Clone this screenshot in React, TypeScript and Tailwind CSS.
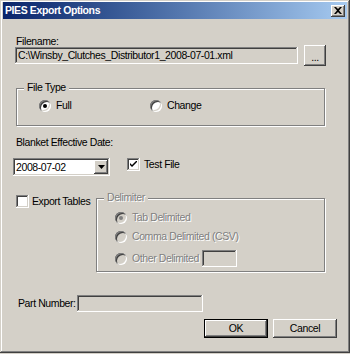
import type { ReactNode } from 'react'

const raised =
  'shadow-[inset_-1px_-1px_#404040,inset_1px_1px_#ffffff,inset_-2px_-2px_#808080,inset_2px_2px_#d4d0c8]'
const sunken =
  'shadow-[inset_-1px_-1px_#ffffff,inset_1px_1px_#808080,inset_-2px_-2px_#d4d0c8,inset_2px_2px_#404040]'
const disabledText = 'text-[#808080] [text-shadow:1px_1px_0_#ffffff]'

function GroupBox({ title, disabled, className, children }: { title: string; disabled?: boolean; className: string; children: ReactNode }) {
  return (
    <div className={`relative border border-[#808080] shadow-[1px_1px_0_#ffffff,inset_1px_1px_0_#ffffff] ${className}`}>
      <span className={`absolute -top-[8px] left-[7px] bg-[#d4d0c8] px-[3px] leading-[13px] ${disabled ? disabledText : ''}`}>
        {title}
      </span>
      {children}
    </div>
  )
}

function Radio({ label, checked, disabled }: { label: string; checked?: boolean; disabled?: boolean }) {
  return (
    <div className="flex items-center">
      <span
        className={`w-[12px] h-[12px] rounded-full shrink-0 ${disabled ? 'bg-[#d4d0c8]' : 'bg-white'} shadow-[inset_1px_1px_#808080,inset_-1px_-1px_#ffffff,inset_2px_2px_#404040,inset_-2px_-2px_#d4d0c8] flex items-center justify-center`}
      >
        {checked && <span className={`w-[4px] h-[4px] rounded-full ${disabled ? 'bg-[#808080]' : 'bg-black'}`} />}
      </span>
      <span className={`ml-[5px] leading-[13px] whitespace-nowrap ${disabled ? disabledText : ''}`}>{label}</span>
    </div>
  )
}

function Checkbox({ checked }: { checked?: boolean }) {
  return (
    <span className={`w-[13px] h-[13px] shrink-0 bg-white ${sunken} flex items-center justify-center`}>
      {checked && (
        <svg width="7" height="7" viewBox="0 0 7 7">
          <path d="M0 2 L0 4 L2 6 L7 1 L7 -1 L2 4 Z" fill="#000" />
        </svg>
      )}
    </span>
  )
}

function Button({ children, isDefault, className }: { children: ReactNode; isDefault?: boolean; className: string }) {
  return (
    <div
      className={`flex items-center justify-center bg-[#d4d0c8] ${
        isDefault
          ? 'border border-black shadow-[inset_-1px_-1px_#404040,inset_1px_1px_#ffffff,inset_-2px_-2px_#808080]'
          : raised
      } ${className}`}
    >
      {children}
    </div>
  )
}

export default function App() {
  return (
    <div className="w-[350px] h-[354px] bg-[#d4d0c8] font-['Liberation_Sans',Arial,sans-serif] text-[10.5px] tracking-[-0.4px] text-black overflow-hidden">
      <div className="w-[350px] h-[353px] shadow-[inset_-1px_-1px_#404040,inset_1px_1px_#d4d0c8,inset_-2px_-2px_#808080,inset_2px_2px_#ffffff] pt-[2px]">
        {/* title bar */}
        <div className="mx-[3px] h-[17px] bg-linear-to-r from-[#0a246a] to-[#a6caf0] flex items-center justify-between pl-[2px] pr-[2px]">
          <span className="text-white font-bold leading-[17px]">PIES Export Options</span>
          <div className={`w-[14px] h-[12px] ${raised} bg-[#d4d0c8] flex items-center justify-center`}>
            <svg width="8" height="7" viewBox="0 0 8 7">
              <path d="M0 0h2l2 2 2-2h2L5 3.5 8 7H6L4 5 2 7H0l3-3.5Z" fill="#000" />
            </svg>
          </div>
        </div>

        <div className="pl-[13px] pr-[13px]">
          {/* Filename */}
          <div className="mt-[16px] ml-[3px] leading-[13px]">Filename:</div>
          <div className="mt-[-3px] h-[21px] flex items-center ml-[2px]">
            <div className={`w-[283px] h-[17px] ${sunken} bg-[#d4d0c8] pl-[3px] leading-[17px] whitespace-nowrap overflow-hidden`}>
              C:\Winsby_Clutches_Distributor1_2008-07-01.xml
            </div>
            <Button className="ml-[6px] w-[22px] h-[21px]">
              <span className="leading-[11px] pt-[4px]">...</span>
            </Button>
          </div>

          {/* File Type */}
          <GroupBox title="File Type" className="mt-[22px] ml-[3px] w-[309px] h-[38px]">
            <div className="flex pt-[10px] pl-[22px]">
              <div className="w-[111px]">
                <Radio label="Full" checked />
              </div>
              <Radio label="Change" />
            </div>
          </GroupBox>

          {/* Blanket date */}
          <div className="mt-[10px] ml-[3px] leading-[13px]">Blanket Effective Date:</div>
          <div className="mt-[9px] flex items-start">
            <div className={`w-[97px] h-[18px] ${sunken} bg-white flex items-center justify-between pl-[3px] pr-[2px]`}>
              <span className="leading-[14px]">2008-07-02</span>
              <div className={`w-[14px] h-[14px] ${raised} bg-[#d4d0c8] flex items-center justify-center`}>
                <svg width="7" height="4" viewBox="0 0 7 4">
                  <path d="M0 0h7L3.5 4Z" fill="#000" />
                </svg>
              </div>
            </div>
            <div className="ml-[17px] flex items-center">
              <Checkbox checked />
              <span className="ml-[4px] leading-[13px]">Test File</span>
            </div>
          </div>

          {/* Export tables + delimiter */}
          <div className="mt-[19px] flex items-start">
            <div className="w-[83px] pl-[3px] flex items-center">
              <Checkbox />
              <span className="ml-[3px] leading-[13px] whitespace-nowrap">Export Tables</span>
            </div>
            <GroupBox title="Delimiter" disabled className="mt-[3px] w-[229px] h-[74px]">
              <div className="pl-[18px] pt-[12px] flex flex-col">
                <Radio label="Tab Delimited" checked disabled />
                <div className="mt-[6px]">
                  <Radio label="Comma Delimited (CSV)" disabled />
                </div>
                <div className="mt-[7px] flex items-center">
                  <Radio label="Other Delimited" disabled />
                  <div className={`ml-[3px] w-[35px] h-[17px] ${sunken} bg-[#d4d0c8]`} />
                </div>
              </div>
            </GroupBox>
          </div>

          {/* Part number */}
          <div className="mt-[23px] flex items-center">
            <span className="ml-[5px] w-[59px] leading-[13px] whitespace-nowrap">Part Number:</span>
            <div className={`w-[126px] h-[17px] ${sunken} bg-[#d4d0c8]`} />
          </div>

          {/* Buttons */}
          <div className="mt-[7px] flex justify-end">
            <Button isDefault className="w-[64px] h-[19px]">
              OK
            </Button>
            <Button className="ml-[5px] w-[64px] h-[19px]">Cancel</Button>
          </div>
        </div>
      </div>
    </div>
  )
}
